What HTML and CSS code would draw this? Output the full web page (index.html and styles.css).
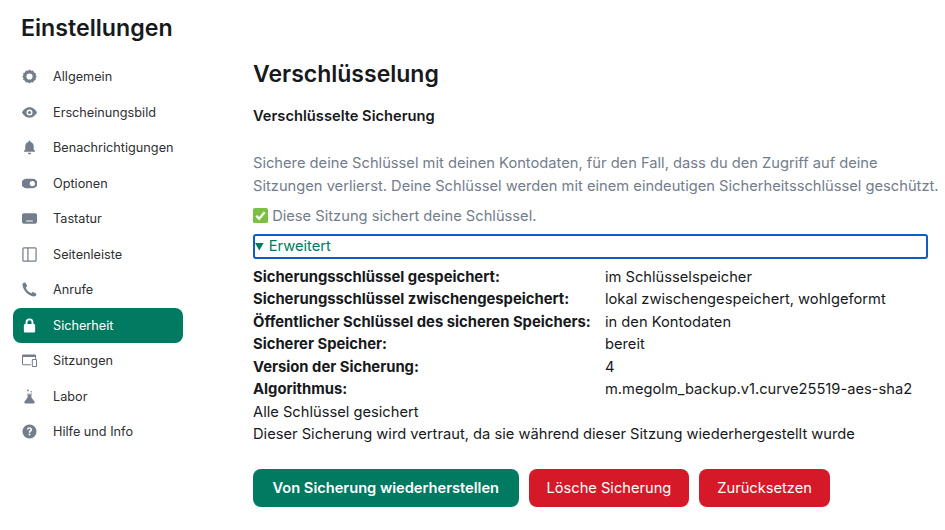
FILE: index.html
```html
<!DOCTYPE html>
<html lang="de">
<head>
    <meta charset="UTF-8">
    <title>Einstellungen</title>
    <link rel="stylesheet" href="styles.css">
</head>
<body>
    <h1 class="dialog-title">Einstellungen</h1>
    <div class="dialog-body">
        <nav class="tabs">
            <a class="tab">
                <svg class="tab-icon" viewBox="0 0 16 16"><path fill-rule="evenodd" d="M8 .5l1.700 1.400 2.200-.3.9 2 2 .9-.3 2.200L15.800 8l-1.300 1.300.3 2.200-2 .9-.9 2-2.200-.3L8 15.500l-1.700-1.400-2.200.3-.9-2-2-.9.3-2.200L.2 8l1.300-1.300-.3-2.200 2-.9.9-2 2.200.3z M8 4.700a3.300 3.300 0 1 0 0 6.600 3.300 3.300 0 0 0 0-6.600z"/></svg>
                Allgemein
            </a>
            <a class="tab">
                <svg class="tab-icon" viewBox="0 0 16 16"><path fill-rule="evenodd" d="M8 2.500c3.800 0 6.700 2.900 8 5.500-1.300 2.600-4.200 5.500-8 5.500S1.300 10.600 0 8c1.300-2.600 4.200-5.500 8-5.500z M8 4.800a3.200 3.200 0 1 0 0 6.400 3.200 3.200 0 0 0 0-6.400z"/><circle cx="8" cy="8" r="1.700"/></svg>
                Erscheinungsbild
            </a>
            <a class="tab">
                <svg class="tab-icon" viewBox="0 0 16 16"><path d="M8 .5c.6 0 1 .4 1 1v.7c2.200.5 3.500 2.300 3.500 4.500v3.500l1.500 1.500v.8H2v-.8l1.500-1.500V6.700c0-2.200 1.300-4 3.500-4.500v-.7c0-.6.400-1 1-1z"/><path d="M6.300 13.700h3.400c0 1-.8 1.800-1.700 1.800s-1.700-.8-1.700-1.800z"/></svg>
                Benachrichtigungen
            </a>
            <a class="tab">
                <svg class="tab-icon" viewBox="0 0 16 16"><path fill-rule="evenodd" d="M4.500 3h7a5 5 0 0 1 0 10h-7a5 5 0 0 1 0-10z M11 5.200a2.800 2.800 0 1 0 0 5.600 2.800 2.800 0 0 0 0-5.600z"/></svg>
                Optionen
            </a>
            <a class="tab">
                <svg class="tab-icon" viewBox="0 0 16 16"><path fill-rule="evenodd" d="M1.800 2.500h12.400c.9 0 1.800.8 1.800 1.700v7.600c0 .9-.9 1.700-1.800 1.700H1.800C.9 13.500 0 12.700 0 11.800V4.200c0-.9.900-1.700 1.800-1.700z M4.500 10v1.200h7V10z"/></svg>
                Tastatur
            </a>
            <a class="tab">
                <svg class="tab-icon" viewBox="0 0 16 16"><path fill="none" stroke="#737d8c" stroke-width="1.300" d="M2 1h12c.6 0 1 .4 1 1v12c0 .6-.4 1-1 1H2c-.6 0-1-.4-1-1V2c0-.6.400-1 1-1z M6.300 1v14"/></svg>
                Seitenleiste
            </a>
            <a class="tab">
                <svg class="tab-icon" viewBox="0 0 16 16"><path d="M.5 3C.3 2 1.300 .7 2.700.5c.6-.1 1.100.2 1.400.7l1.200 2.400c.2.500.1 1-.3 1.400L4 6c.9 2.300 3.200 4.800 5.900 5.900l1.100-1c.4-.4.900-.4 1.400-.1l2.500 1.500c.5.300.6.900.4 1.400-.5 1-1.600 2-2.800 1.800C6.400 14.500 1.300 9.300.5 3z"/></svg>
                Anrufe
            </a>
            <a class="tab tab-active">
                <svg class="tab-icon" viewBox="0 0 16 16"><path fill-rule="evenodd" d="M3.800 6.500V4.700a4.200 4.200 0 0 1 8.400 0v1.800h.3c.9 0 1.500.7 1.500 1.500v6c0 .9-.6 1.500-1.500 1.500h-9C2.600 15.500 2 14.900 2 14V8c0-.8.600-1.500 1.500-1.500z M5.800 6.500h4.400V4.700a2.200 2.200 0 0 0-4.400 0z"/></svg>
                Sicherheit
            </a>
            <a class="tab">
                <svg class="tab-icon" viewBox="0 0 16 16"><path fill="none" stroke="#737d8c" stroke-width="1.100" d="M9.500 12.500H1.300c-.4 0-.8-.4-.8-.8V3c0-.4.400-.8.800-.8h12.400c.4 0 .8.400.8.800v3"/><path d="M.5 3c0-.4.400-.8.800-.8h12.400c.4 0 .8.400.8.800v1.200H.5z"/><rect x="11" y="7" width="4.500" height="7.500" rx=".8" fill="none" stroke="#737d8c" stroke-width="1.100"/></svg>
                Sitzungen
            </a>
            <a class="tab">
                <svg class="tab-icon" viewBox="0 0 16 16"><path d="M6 6.500h4v2.500l3.300 4.300c.6.800 0 2.200-.9 2.200H3.600c-.9 0-1.500-1.400-.9-2.200L6 9z"/><rect x="5.300" y="5" width="5.400" height="1"/><circle cx="6.300" cy="1.500" r="1"/><circle cx="9.800" cy="2.800" r=".8"/></svg>
                Labor
            </a>
            <a class="tab">
                <svg class="tab-icon" viewBox="0 0 16 16"><path fill-rule="evenodd" d="M8 .5a7.500 7.500 0 1 1 0 15A7.500 7.500 0 0 1 8 .5z M8 3.500c-1.600 0-2.700.9-2.800 2.400h1.600c.1-.6.500-1 1.200-1s1.100.4 1.100 1c0 .4-.2.700-.8 1.100C7.400 7.500 7.200 8 7.200 9.300h1.600c0-.7.200-1 .8-1.400.8-.5 1.200-1.100 1.200-1.900 0-1.500-1.100-2.500-2.800-2.500z M8 10.200a1 1 0 1 0 0 2 1 1 0 0 0 0-2z"/></svg>
                Hilfe und Info
            </a>
        </nav>
        <main class="content">
            <h2 class="section-title">Verschlüsselung</h2>
            <h3 class="sub-title">Verschlüsselte Sicherung</h3>
            <p class="description">Sichere deine Schlüssel mit deinen Kontodaten, für den Fall, dass du den Zugriff auf deine Sitzungen verlierst. Deine Schlüssel werden mit einem eindeutigen Sicherheitsschlüssel geschützt.</p>
            <p class="status"><svg class="check" viewBox="0 0 16 16"><rect width="16" height="16" rx="2" fill="#7ac143"/><path d="M3.500 8.300l3 3.200 6-7" fill="none" stroke="#fff" stroke-width="2.400"/></svg> Diese Sitzung sichert deine Schlüssel.</p>
            <details class="advanced" open>
                <summary class="advanced-summary">Erweitert</summary>
            </details>
            <dl class="info-table">
                <dt>Sicherungsschlüssel gespeichert:</dt>
                <dd>im Schlüsselspeicher</dd>
                <dt>Sicherungsschlüssel zwischengespeichert:</dt>
                <dd>lokal zwischengespeichert, wohlgeformt</dd>
                <dt>Öffentlicher Schlüssel des sicheren Speichers:</dt>
                <dd>in den Kontodaten</dd>
                <dt>Sicherer Speicher:</dt>
                <dd>bereit</dd>
                <dt>Version der Sicherung:</dt>
                <dd>4</dd>
                <dt>Algorithmus:</dt>
                <dd>m.megolm_backup.v1.curve25519-aes-sha2</dd>
            </dl>
            <div class="line">Alle Schlüssel gesichert</div>
            <div class="line">Dieser Sicherung wird vertraut, da sie während dieser Sitzung wiederhergestellt wurde</div>
            <div class="actions">
                <button class="btn btn-primary">Von Sicherung wiederherstellen</button>
                <button class="btn btn-danger">Lösche Sicherung</button>
                <button class="btn btn-danger">Zurücksetzen</button>
            </div>
        </main>
    </div>
</body>
</html>
```

FILE: styles.css
```css
html, body {
    height: 530px;
    overflow: hidden;
}

body {
    margin: 0;
    background-color: #fff;
    color: #17191c;
    font-family: Inter, sans-serif;
    font-size: 14.7px;
}

.dialog-title {
    margin: 0;
    padding: 13px 0 0 21px;
    font-size: 23.2px;
    line-height: 30px;
    font-weight: 600;
}

.dialog-body {
    display: flex;
    margin-top: 12px;
}

.tabs {
    display: flex;
    flex-direction: column;
    width: 170px;
    margin-left: 13px;
    flex-shrink: 0;
    padding-top: 4px;
}

.tab {
    display: flex;
    align-items: center;
    height: 35.5px;
    padding-left: 9px;
    border-radius: 8px;
    font-size: 12.7px;
    color: #2e2f32;
    box-sizing: border-box;
}

.tab-icon {
    width: 15px;
    height: 15px;
    margin-right: 16px;
    fill: #737d8c;
    flex-shrink: 0;
}

.tab-active {
    background-color: #007a61;
    color: #fff;
}

.tab-active .tab-icon {
    fill: #fff;
}

.content {
    margin-left: 70px;
    width: 690px;
}

.section-title {
    margin: 0;
    padding-top: 4px;
    font-size: 23px;
    line-height: 30px;
    font-weight: 600;
}

.sub-title {
    margin: 17px 0 0;
    font-size: 14.7px;
    line-height: 20px;
    font-weight: 600;
}

.description {
    margin: 26px 0 0;
    color: #737d8c;
    font-size: 14.7px;
    line-height: 23px;
}

.status {
    margin: 7px 0 0;
    color: #737d8c;
    line-height: 22px;
}

.check {
    width: 15px;
    height: 15px;
    vertical-align: -2px;
}

.advanced {
    margin-top: 7px;
    border: 2px solid #0f5cc7;
    border-radius: 3px;
    box-sizing: border-box;
    height: 25px;
    width: 675px;
}

.advanced-summary {
    color: #007a61;
    line-height: 20px;
    cursor: pointer;
}

.advanced-summary::marker {
    font-size: 13px;
}

.info-table {
    display: grid;
    grid-template-columns: 352px 1fr;
    margin: 6.500px 0 0;
    line-height: 22.500px;
}

.info-table dt {
    font-size: 14.8px;
    font-weight: 700;
}

.info-table dd {
    margin: 0;
}

.line {
    line-height: 22.500px;
}

.actions {
    display: flex;
    gap: 10px;
    margin-top: 23.500px;
}

.btn {
    border: none;
    border-radius: 8px;
    height: 38px;
    padding: 0 18px;
    font-family: Inter, sans-serif;
    font-size: 14.65px;
    color: #fff;
    cursor: pointer;
}

.btn-primary {
    padding: 0 19.500px;
    background-color: #007a61;
    font-weight: 600;
}

.btn-danger {
    background-color: #d51928;
}
```
